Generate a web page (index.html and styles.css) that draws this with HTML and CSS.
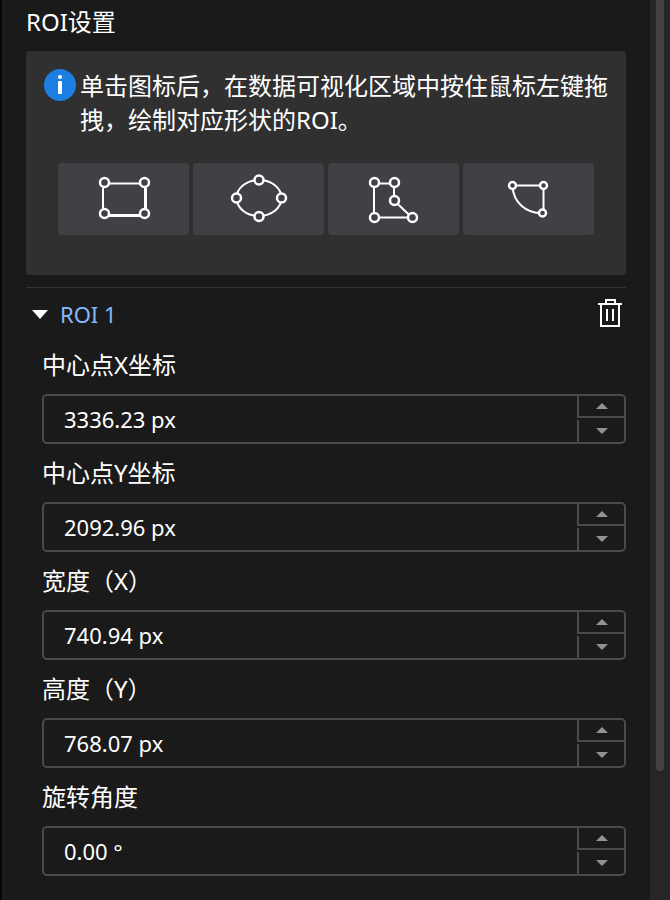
FILE: index.html
```html
<!DOCTYPE html>
<html lang="zh-CN">
<head>
  <meta charset="UTF-8" />
  <title>ROI设置</title>
  <meta name="viewport" content="width=device-width, initial-scale=1.0">
  <link rel="stylesheet" href="styles.css">
</head>
<body>
  <div class="panel">
    <main class="panel-content">
      <h1 class="panel-title">ROI设置</h1>

      <!-- Drawing tools -->
      <section class="tool-box">
        <div class="hint">
          <svg class="info-icon" viewBox="0 0 32 32" aria-hidden="true">
            <circle cx="16" cy="16" r="16" fill="#1a7fe0"/>
            <circle cx="16" cy="8" r="2" fill="#fff"/>
            <rect x="14" y="12" width="4" height="13" rx="1" fill="#fff"/>
          </svg>
          <p class="hint-text">单击图标后，在数据可视化区域中按住鼠标左键拖拽，绘制对应形状的ROI。</p>
        </div>
        <div class="tools">
          <button class="tool-btn" type="button" aria-label="矩形">
            <svg class="tool-icon" viewBox="0 0 60 60">
              <path d="M11 14.500H50M9 19V40" stroke-width="2"/>
              <path d="M51.500 19V40M15 46.500H46" stroke-width="3"/>
              <circle cx="10.500" cy="13.500" r="4.500"/>
              <circle cx="50.500" cy="13.500" r="4.500"/>
              <circle cx="10.500" cy="44.500" r="4.500"/>
              <circle cx="50.500" cy="44.500" r="4.500"/>
            </svg>
          </button>
          <button class="tool-btn" type="button" aria-label="椭圆">
            <svg class="tool-icon" viewBox="0 0 60 60">
              <ellipse cx="30" cy="29" rx="22.500" ry="18"/>
              <circle cx="30" cy="11" r="4.500"/>
              <circle cx="7.500" cy="29" r="4.500"/>
              <circle cx="52.500" cy="29" r="4.500"/>
              <circle cx="30" cy="47.500" r="4.500"/>
            </svg>
          </button>
          <button class="tool-btn" type="button" aria-label="多边形">
            <svg class="tool-icon" viewBox="0 0 60 60">
              <path d="M10 14V48.500H48L30 31.500V14.500H10"/>
              <circle cx="10.500" cy="13.500" r="4.500"/>
              <circle cx="30.500" cy="13.500" r="4.500"/>
              <circle cx="30.500" cy="31.500" r="4.500"/>
              <circle cx="10.500" cy="48.500" r="4.500"/>
              <circle cx="48.500" cy="48.500" r="4.500"/>
            </svg>
          </button>
          <button class="tool-btn" type="button" aria-label="扇形">
            <svg class="tool-icon" viewBox="0 0 60 60">
              <path d="M13.500 16.500H44.500V44C28 45 14 34 13.500 16.500"/>
              <circle cx="13.500" cy="16.500" r="3.500"/>
              <circle cx="44.500" cy="16.500" r="3.500"/>
              <circle cx="43.500" cy="44" r="3.500"/>
            </svg>
          </button>
        </div>
      </section>

      <!-- ROI item -->
      <section class="roi">
        <div class="roi-header">
          <button class="roi-toggle" type="button" aria-expanded="true">
            <span class="caret"></span>
            ROI 1
          </button>
          <button class="delete-btn" type="button" aria-label="删除">
            <svg class="trash-icon" viewBox="0 0 24 30">
              <path d="M0 5H24M8 4V1H17V4M3 5V27H21V5M9 10V22M15 10V22"/>
            </svg>
          </button>
        </div>

        <div class="field">
          <label class="field-label" for="centerX">中心点X坐标</label>
          <div class="spin-box">
            <input class="spin-input" type="text" id="centerX" value="3336.23 px">
            <div class="stepper">
              <button class="step-btn step-up" type="button" aria-label="增加"></button>
              <button class="step-btn step-down" type="button" aria-label="减少"></button>
            </div>
          </div>
        </div>
        <div class="field">
          <label class="field-label" for="centerY">中心点Y坐标</label>
          <div class="spin-box">
            <input class="spin-input" type="text" id="centerY" value="2092.96 px">
            <div class="stepper">
              <button class="step-btn step-up" type="button" aria-label="增加"></button>
              <button class="step-btn step-down" type="button" aria-label="减少"></button>
            </div>
          </div>
        </div>
        <div class="field">
          <label class="field-label" for="sizeX">宽度（X）</label>
          <div class="spin-box">
            <input class="spin-input" type="text" id="sizeX" value="740.94 px">
            <div class="stepper">
              <button class="step-btn step-up" type="button" aria-label="增加"></button>
              <button class="step-btn step-down" type="button" aria-label="减少"></button>
            </div>
          </div>
        </div>
        <div class="field">
          <label class="field-label" for="sizeY">高度（Y）</label>
          <div class="spin-box">
            <input class="spin-input" type="text" id="sizeY" value="768.07 px">
            <div class="stepper">
              <button class="step-btn step-up" type="button" aria-label="增加"></button>
              <button class="step-btn step-down" type="button" aria-label="减少"></button>
            </div>
          </div>
        </div>
        <div class="field">
          <label class="field-label" for="angle">旋转角度</label>
          <div class="spin-box">
            <input class="spin-input" type="text" id="angle" value="0.00 °">
            <div class="stepper">
              <button class="step-btn step-up" type="button" aria-label="增加"></button>
              <button class="step-btn step-down" type="button" aria-label="减少"></button>
            </div>
          </div>
        </div>
      </section>
    </main>

    <!-- Scrollbar -->
    <div class="scroll-track">
      <div class="scroll-thumb"></div>
    </div>
  </div>
</body>
</html>
```
FILE: styles.css
```css
:root {
  --bg: #1a1a1a;
  --box: #303030;
  --button: #404145;
  --line: #4a4a4a;
  --text: #fff;
  --link: #86b8fa;
}

* {
  margin: 0;
  padding: 0;
  box-sizing: border-box;
}
body, input, button {
  font-family: "Noto Sans", "Noto Sans CJK SC", sans-serif;
  color: var(--text);
}
body {
  background: var(--bg);
  font-size: 24px;
}
button {
  background: none;
  border: none;
  cursor: pointer;
}

/* Panel */
.panel {
  display: flex;
  min-height: 100vh;
  border-left: 2px solid #050505;
}
.panel-content {
  flex: 1;
  padding: 4px 24px 22px;
}
.panel-title {
  font-size: 24px;
  font-weight: 400;
  line-height: 36px;
  margin-bottom: 11px;
}

/* Drawing tools */
.tool-box {
  background: var(--box);
  border-radius: 4px;
  padding: 18px 16px 40px 18px;
  margin-bottom: 12px;
}
.hint {
  display: flex;
  gap: 4px;
}
.info-icon {
  flex-shrink: 0;
  width: 32px;
  height: 32px;
}
.hint-text {
  line-height: 34px;
}
.tools {
  display: flex;
  gap: 4px;
  padding: 0 16px 0 14px;
  margin-top: 26px;
}
.tool-btn {
  flex: 1;
  display: flex;
  justify-content: center;
  align-items: center;
  height: 72px;
  background: var(--button);
  border-radius: 4px;
}
.tool-icon {
  width: 60px;
  height: 60px;
  fill: none;
  stroke: #fff;
  stroke-width: 2;
}
.tool-icon circle {
  fill: var(--button);
  stroke-width: 2.5;
}

/* ROI item */
.roi {
  border-top: 1px solid #333;
}
.roi-header {
  display: flex;
  justify-content: space-between;
  align-items: center;
  height: 52px;
  padding: 0 4px 0 6px;
}
.roi-toggle {
  display: flex;
  align-items: center;
  gap: 12px;
  font-size: 22px;
  color: var(--link);
}
.caret {
  border: 8px solid transparent;
  border-top: 9px solid #fff;
  border-bottom: none;
}
.trash-icon {
  display: block;
  width: 24px;
  height: 30px;
  fill: none;
  stroke: #fff;
  stroke-width: 2;
}

/* Fields */
.field {
  padding-left: 16px;
}
.field-label {
  display: block;
  line-height: 50px;
  margin-bottom: 4px;
}
.spin-box {
  display: flex;
  height: 50px;
  border: 2px solid var(--line);
  border-radius: 5px;
  margin-bottom: 4px;
}
.spin-input {
  flex: 1;
  min-width: 0;
  padding-left: 20px;
  font-size: 22px;
  background: none;
  border: none;
  outline: none;
}
.stepper {
  display: flex;
  flex-direction: column;
  width: 47px;
}
.step-btn {
  display: flex;
  justify-content: center;
  align-items: center;
  border-left: 2px solid var(--line);
}
.step-up {
  height: 22px;
  border-bottom: 2px solid var(--line);
}
.step-down {
  flex: 1;
  margin-top: 2px;
}
.step-btn::before {
  content: "";
  border: 6px solid transparent;
}
.step-up::before {
  border-top: none;
  border-bottom-color: #929292;
}
.step-down::before {
  border-bottom: none;
  border-top-color: #929292;
}

/* Scrollbar */
.scroll-track {
  width: 20px;
  padding: 0 6px;
  background: #262626;
}
.scroll-thumb {
  height: 771px;
  background: #434343;
  border-radius: 0 0 4px 4px;
}
```
